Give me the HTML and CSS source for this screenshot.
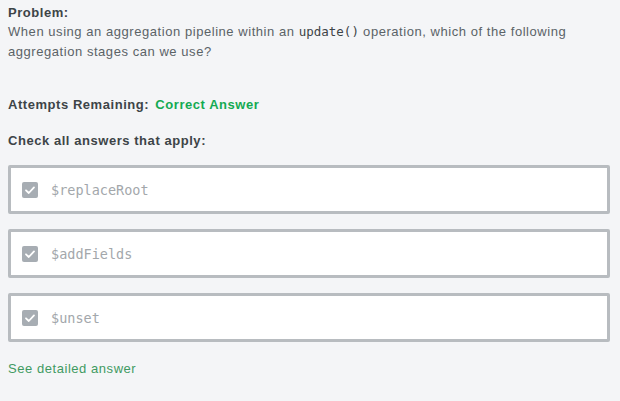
FILE: index.html
```html
<!DOCTYPE html>
<html>
<head>
<meta charset="utf-8">
<link rel="stylesheet" href="styles.css">
</head>
<body>
<div class="page">
  <div class="problem">
    <div class="label">Problem:</div>
    <p class="text">When using an aggregation pipeline within an <code>update()</code> operation, which of the following aggregation stages can we use?</p>
  </div>
  <div class="attempts"><span class="label">Attempts Remaining:</span> <span class="correct">Correct Answer</span></div>
  <div class="label check">Check all answers that apply:</div>
  <div class="options">
    <div class="option"><span class="box"><svg width="16" height="16" viewBox="0 0 16 16"><path d="M4 8.3 L6.8 11 L12 5.4" fill="none" stroke="#fff" stroke-width="1.8" stroke-linecap="round" stroke-linejoin="round"/></svg></span><span class="mono">$replaceRoot</span></div>
    <div class="option"><span class="box"><svg width="16" height="16" viewBox="0 0 16 16"><path d="M4 8.3 L6.8 11 L12 5.4" fill="none" stroke="#fff" stroke-width="1.8" stroke-linecap="round" stroke-linejoin="round"/></svg></span><span class="mono">$addFields</span></div>
    <div class="option"><span class="box"><svg width="16" height="16" viewBox="0 0 16 16"><path d="M4 8.3 L6.8 11 L12 5.4" fill="none" stroke="#fff" stroke-width="1.8" stroke-linecap="round" stroke-linejoin="round"/></svg></span><span class="mono">$unset</span></div>
  </div>
  <a class="detail">See detailed answer</a>
</div>
</body>
</html>
```
FILE: styles.css
```css
html, body {
  margin: 0;
  padding: 0;
  background: #f4f5f7;
}
body {
  font-family: "Liberation Sans", Arial, sans-serif;
  font-size: 13px;
  letter-spacing: 0.55px;
  color: #3d4f58;
}
.page {
  padding: 4px 8px 0 8px;
  width: 602px;
}
.label {
  font-weight: bold;
  color: #3d4447;
}
.problem .label {
  line-height: 18px;
}
.text {
  margin: 0;
  line-height: 20px;
  color: #5b6367;
}
code {
  font-family: "DejaVu Sans Mono", monospace;
  font-size: 12.5px;
  letter-spacing: 0;
  line-height: 1;
  color: #3d4447;
}
.attempts {
  margin-top: 34px;
  line-height: 18px;
}
.correct {
  font-weight: bold;
  color: #13aa52;
  margin-left: 2px;
}
.check {
  margin-top: 18px;
  line-height: 18px;
}
.options {
  margin-top: 15px;
  display: flex;
  flex-direction: column;
  gap: 15px;
}
.option {
  height: 43px;
  border: 3px solid #b8bcc0;
  border-radius: 2px;
  background: #fff;
  display: flex;
  align-items: center;
  padding-left: 11px;
  gap: 13px;
}
.box {
  width: 16px;
  height: 16px;
  border-radius: 2px;
  background: #a7adb3;
  display: flex;
}
.mono {
  font-family: "DejaVu Sans Mono", monospace;
  font-size: 13.5px;
  letter-spacing: 0;
  color: #a3a7ab;
}
.detail {
  display: block;
  margin-top: 18px;
  color: #3f9a62;
  line-height: 18px;
}
```
